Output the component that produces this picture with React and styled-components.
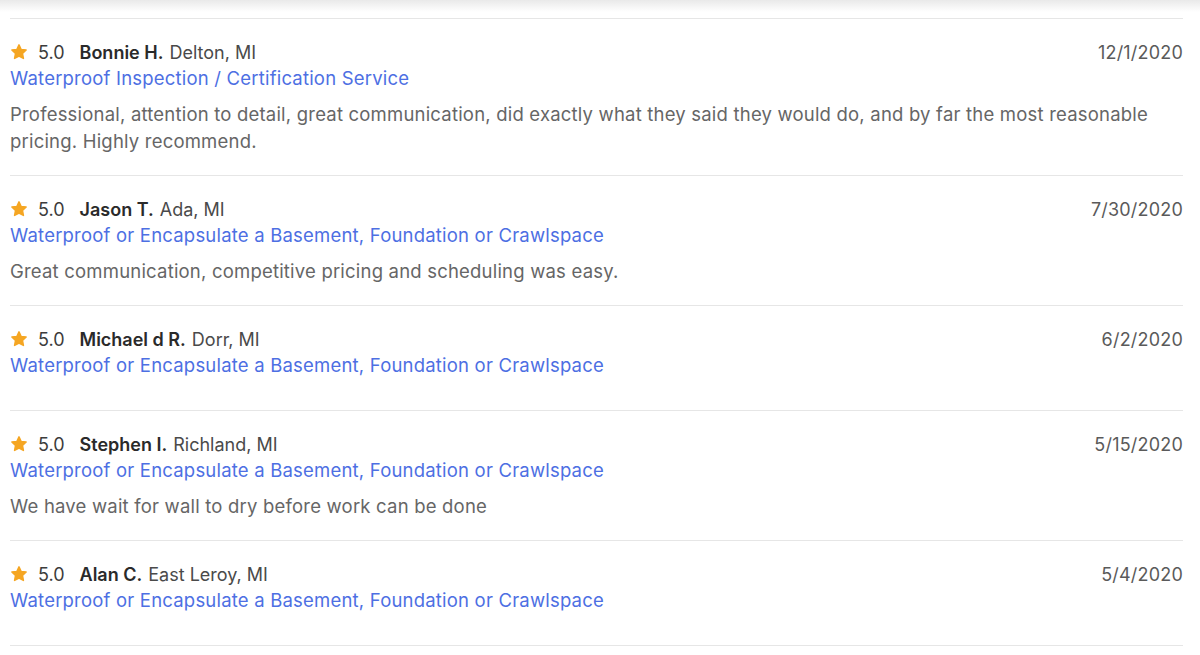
import React from 'react';
import styled, { createGlobalStyle } from 'styled-components';

const GlobalStyle = createGlobalStyle`
    html, body {
        margin: 0;
        padding: 0;
        background: #fff;
    }
    body {
        font-family: 'Inter', 'Open Sans', sans-serif;
        letter-spacing: 0.2px;
    }
`;

const Page = styled.div`
    width: 1200px;
`;

const TopShade = styled.div`
    height: 12px;
    background: linear-gradient(#e9e9e9, #ffffff);
`;

const ReviewList = styled.ul`
    list-style: none;
    margin: 6px 17px 0 10px;
    padding: 0;
    border-bottom: 1px solid #e6e6e6;
`;

const Review = styled.li`
    border-top: 1px solid #e6e6e6;
    padding: 20px 0 ${props => props.hasText ? '20px' : '32px'} 0;
`;

const Header = styled.div`
    display: flex;
    align-items: center;
    justify-content: space-between;
    height: 26px;
    font-size: 18px;
    letter-spacing: 0;
`;

const Who = styled.div`
    display: flex;
    align-items: center;
`;

const Rating = styled.span`
    color: #3c3c3c;
    margin: 0 15px 0 10px;
`;

const Name = styled.span`
    font-weight: 600;
    color: #2a2a2a;
    margin-right: 6px;
`;

const Location = styled.span`
    color: #4a4a4a;
`;

const DateText = styled.span`
    color: #5a5a5a;
    letter-spacing: 0.2px;
`;

const Service = styled.a`
    display: block;
    color: #4d6fe3;
    font-size: 18.5px;
    line-height: 26px;
    text-decoration: none;
`;

const Text = styled.p`
    margin: 10px 0 0 0;
    color: #666;
    font-size: 18.5px;
    line-height: 27px;
`;

const Star = () => (
    <svg width="18" height="18" viewBox="0 0 24 24">
        <path
            fill="#f5a623"
            d="M12 2.5l2.9 6.1 6.6.8-4.9 4.6 1.3 6.6L12 17.3l-5.9 3.3 1.3-6.6L2.5 9.4l6.6-.8z"
            stroke="#f5a623"
            strokeWidth="2"
            strokeLinejoin="round"
        />
    </svg>
);

const reviews = [
    {
        name: 'Bonnie H.',
        location: 'Delton, MI',
        date: '12/1/2020',
        service: 'Waterproof Inspection / Certification Service',
        text: 'Professional, attention to detail, great communication, did exactly what they said they would do, and by far the most reasonable pricing. Highly recommend.'
    },
    {
        name: 'Jason T.',
        location: 'Ada, MI',
        date: '7/30/2020',
        service: 'Waterproof or Encapsulate a Basement, Foundation or Crawlspace',
        text: 'Great communication, competitive pricing and scheduling was easy.'
    },
    {
        name: 'Michael d R.',
        location: 'Dorr, MI',
        date: '6/2/2020',
        service: 'Waterproof or Encapsulate a Basement, Foundation or Crawlspace'
    },
    {
        name: 'Stephen I.',
        location: 'Richland, MI',
        date: '5/15/2020',
        service: 'Waterproof or Encapsulate a Basement, Foundation or Crawlspace',
        text: 'We have wait for wall to dry before work can be done'
    },
    {
        name: 'Alan C.',
        location: 'East Leroy, MI',
        date: '5/4/2020',
        service: 'Waterproof or Encapsulate a Basement, Foundation or Crawlspace'
    }
];

const App = () => (
    <Page>
        <GlobalStyle />
        <TopShade />
        <ReviewList>
            {reviews.map(r => (
                <Review key={r.name} hasText={!!r.text}>
                    <Header>
                        <Who>
                            <Star />
                            <Rating>5.0</Rating>
                            <Name>{r.name}</Name>
                            <Location>{r.location}</Location>
                        </Who>
                        <DateText>{r.date}</DateText>
                    </Header>
                    <Service href="#">{r.service}</Service>
                    {r.text && <Text>{r.text}</Text>}
                </Review>
            ))}
        </ReviewList>
    </Page>
);

export default App;
